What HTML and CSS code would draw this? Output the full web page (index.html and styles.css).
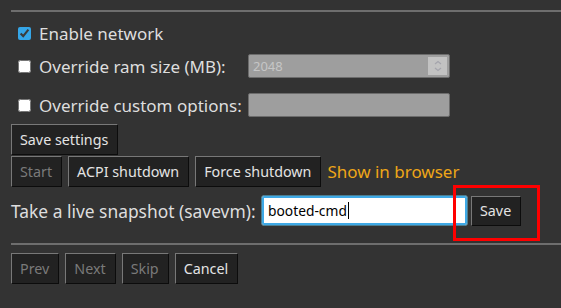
FILE: index.html
```html
<!DOCTYPE html>
<html lang="en">
<head>
    <meta charset="UTF-8">
    <meta name="viewport" content="width=device-width, initial-scale=1.0">
    <title>VM settings</title>
    <link rel="stylesheet" href="styles.css">
</head>
<body>
    <div class="page">
        <hr class="rule rule-top">

        <div class="options">
            <label class="check-row full">
                <input type="checkbox" checked>
                <span>Enable network</span>
            </label>

            <label class="check-row row-ram">
                <input type="checkbox">
                <span>Override ram size (MB):</span>
            </label>
            <div class="field number-field row-ram">
                <span class="field-value">2048</span>
                <span class="spinner">
                    <svg width="12" height="14" viewBox="0 0 12 14">
                        <path d="M3 5 L6 2.5 L9 5" fill="none" stroke="#a4a4ac" stroke-width="1.2"/>
                        <path d="M3 9 L6 11.5 L9 9" fill="none" stroke="#a4a4ac" stroke-width="1.2"/>
                    </svg>
                </span>
            </div>

            <label class="check-row row-custom">
                <input type="checkbox">
                <span>Override custom options:</span>
            </label>
            <div class="field row-custom"></div>
        </div>

        <div class="btn-row save-row">
            <button class="btn">Save settings</button>
        </div>

        <div class="btn-row control-row">
            <button class="btn" disabled>Start</button>
            <button class="btn">ACPI shutdown</button>
            <button class="btn">Force shutdown</button>
            <a class="link" href="#">Show in browser</a>
        </div>

        <div class="snapshot-row">
            <span class="snapshot-label">Take a live snapshot (savevm):</span>
            <div class="snapshot-input">booted-cmd<span class="caret"></span></div>
            <button class="btn btn-save">Save</button>
            <div class="highlight"></div>
        </div>

        <hr class="rule rule-bottom">

        <div class="btn-row nav-row">
            <button class="btn" disabled>Prev</button>
            <button class="btn" disabled>Next</button>
            <button class="btn" disabled>Skip</button>
            <button class="btn">Cancel</button>
        </div>
    </div>
</body>
</html>
```

FILE: styles.css
```css
* {
    margin: 0;
    padding: 0;
    box-sizing: border-box;
}

body {
    background: #333333;
    color: #dedede;
    font-family: "Noto Sans", "Open Sans", sans-serif;
    font-size: 17px;
    overflow: hidden;
}

.page {
    padding: 10px 0 0 11px;
}

.rule {
    border: none;
    height: 2px;
    background: #6e6e6e;
}

.options {
    display: grid;
    grid-template-columns: 237px 202px;
    margin-top: 9px;
}

.check-row {
    display: flex;
    align-items: center;
    height: 24px;
    white-space: nowrap;
}

.check-row.full {
    grid-column: 1 / 3;
}

.row-ram {
    margin-top: 9px;
}

.row-custom {
    margin-top: 15px;
}

.check-row input {
    width: 13px;
    height: 13px;
    margin: 0 8px 0 7px;
    accent-color: #35a6e8;
}

.field {
    height: 24px;
    background: #9e9e9e;
    border: 1px solid #6c6c6c;
    border-radius: 2px;
}

.number-field {
    display: flex;
    align-items: center;
    justify-content: space-between;
    padding: 0 2px 0 4px;
}

.field-value {
    color: #c6c6c6;
    font-size: 13px;
}

.spinner {
    display: flex;
    align-items: center;
    justify-content: center;
    width: 19px;
    height: 18px;
    background: #c2c2c2;
}

.btn-row {
    display: flex;
    align-items: center;
    gap: 6px;
}

.save-row {
    margin-top: 7px;
}

.control-row {
    margin-top: 1px;
}

.btn {
    height: 31px;
    padding: 0 9px 0 8px;
    background: #222222;
    color: #e4e4e4;
    font-family: "Noto Sans", "Open Sans", sans-serif;
    font-size: 14.3px;
    white-space: nowrap;
    border: 1px solid;
    border-color: #787878 #0c0c0c #0c0c0c #787878;
}

.btn:disabled {
    color: #7a7a7a;
}

.link {
    color: #eea618;
    text-decoration: none;
    font-size: 17px;
}

.snapshot-row {
    position: relative;
    display: flex;
    align-items: center;
    height: 31px;
    margin-top: 8px;
}

.snapshot-label {
    width: 250px;
    font-size: 17.4px;
    white-space: nowrap;
}

.snapshot-input {
    display: flex;
    align-items: center;
    width: 207px;
    height: 31px;
    padding-left: 6px;
    background: #ffffff;
    color: #000000;
    font-size: 13.8px;
    border: 1px solid #4b7d90;
    border-radius: 3px;
    box-shadow: inset 0 0 0 2px #3fa9e6;
}

.caret {
    width: 1px;
    height: 17px;
    margin-left: 1px;
    background: #000000;
}

.btn-save {
    height: 30px;
    margin-left: 3px;
}

.highlight {
    position: absolute;
    left: 442px;
    top: -10px;
    width: 87px;
    height: 56px;
    border: 3px solid #ff0000;
}

.rule-bottom {
    margin-top: 17px;
}

.nav-row {
    margin-top: 8px;
}
```
